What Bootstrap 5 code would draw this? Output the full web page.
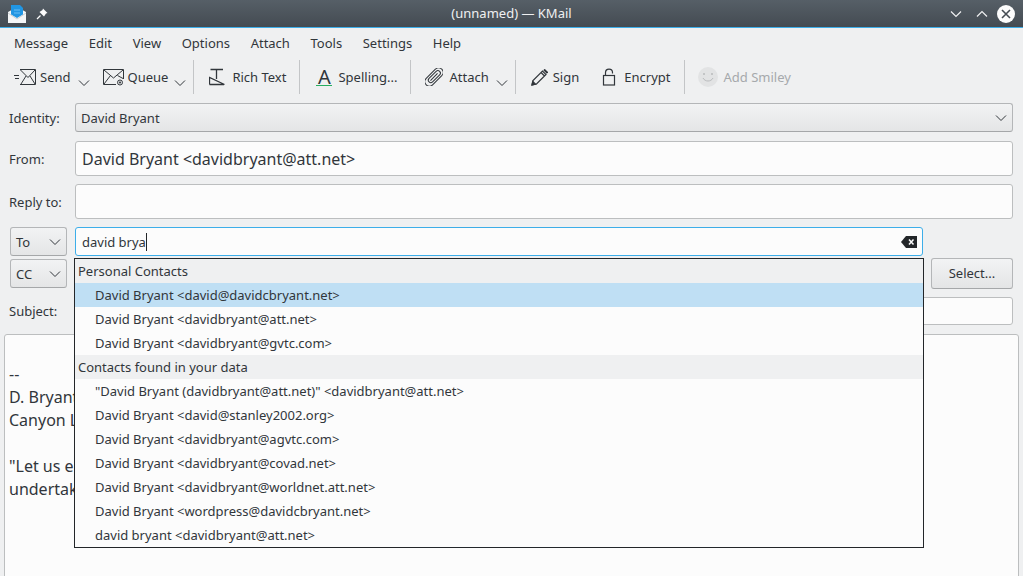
<!DOCTYPE html>
<html lang="en">
<head>
  <meta charset="UTF-8">
  <title>(unnamed) — KMail</title>
  <link href="https://cdn.jsdelivr.net/npm/bootstrap@5.3.0/dist/css/bootstrap.min.css" rel="stylesheet">
  <style>
    html, body { height: 576px; overflow: hidden; }
    body { background: #eff0f1; color: #31363b; font-family: "Noto Sans", sans-serif; font-size: 13px; line-height: 18px; position: relative; }
    svg { display: block; flex: none; }
    /* title bar */
    .titlebar { height: 28px; background: linear-gradient(#565f67, #444b52); border-bottom: 1px solid #3daee9; position: relative; padding: 0 8px 0 8px; }
    .title-text { position: absolute; left: 0; right: 0; top: 4px; text-align: center; color: #eff0f1; }
    .pin-icon { margin-left: 10px; }
    /* menu */
    .menubar { height: 30px; padding-left: 3.7px; }
    .menu-item { padding: 0 10.3px; }
    /* toolbar */
    .toolbar { height: 40px; padding: 0 0 2px 14px; }
    .tool { display: flex; align-items: center; white-space: nowrap; }
    .tool-off { color: #a6a9ac; }
    .arrow { margin-top: 12px; }
    .tool-sep { width: 1px; height: 34px; background: #c3c5c7; }
    .t-send { gap: 4px; }
    .a-send { margin-left: 7px; }
    .t-queue { gap: 3px; margin-left: 13px; }
    .a-queue { margin-left: 6px; }
    .s-queue { margin-left: 7px; }
    .t-rich { gap: 5px; margin-left: 15px; }
    .s-rich, .s-spell { margin-left: 13px; }
    .t-spell { gap: 6px; margin-left: 16px; }
    .spell-a { width: 16px; height: 17px; line-height: 15px; font-size: 20px; text-align: center; border-bottom: 1px solid #27ae60; }
    .t-attach { gap: 6px; margin-left: 14px; }
    .a-attach { margin-left: 7px; }
    .s-attach { margin-left: 7px; }
    .t-sign { gap: 5px; margin-left: 15px; }
    .t-encrypt { gap: 8px; margin-left: 23px; }
    .s-encrypt { margin-left: 14px; }
    .t-smiley { gap: 5px; margin-left: 13px; }
    /* form */
    .form-area { padding: 5px 10px 0 9px; }
    .form-line { display: flex; align-items: center; margin-bottom: 8px; }
    .identity-line { margin-bottom: 9px; }
    .lbl { width: 66px; flex: none; }
    .field { flex: 1; background: #fcfcfc; border: 1px solid #bcbebf; border-radius: 3px; padding: 0 6px; display: flex; align-items: center; }
    .combo-box { background: linear-gradient(#f2f3f4, #e4e5e6); border: 1px solid #b4b6b8; border-bottom-color: #a5a7a9; border-radius: 3px; display: flex; align-items: center; justify-content: space-between; padding: 0 5px; height: 29px; }
    .identity { flex: 1; }
    .from-field { height: 35px; font-size: 16px; }
    .reply-field { height: 35px; }
    .kind { width: 57px; margin-left: 1px; margin-right: 8px; flex: none; }
    .to-field { height: 29px; border-color: #3daee9; padding-right: 5px; justify-content: space-between; margin-right: 90px; }
    .caret-line { display: inline-block; width: 1px; height: 18px; background: #232629; vertical-align: -4px; }
    .select-btn { width: 82px; height: 31px; margin: -1px 0 -1px 8px; padding-bottom: 2px; justify-content: center; }
    .subject-field { height: 28px; }
    .to-line { margin-bottom: 3px; }
    .cc-line { margin-bottom: 9px; }
    /* editor */
    .editor { position: absolute; left: 4px; top: 334px; width: 1015px; height: 250px; background: #fcfcfc; border: 1px solid #bcbebf; border-radius: 3px 3px 0 0; padding: 28px 4px 0; font-size: 16px; line-height: 23px; color: #31363b; }
    /* completion popup */
    .popup { position: absolute; left: 74px; top: 258px; width: 850px; height: 290px; background: #fcfcfc; border: 1px solid #232629; }
    .pop-head { height: 24px; line-height: 24px; background: #eff0f1; padding-left: 3px; }
    .pop-row { height: 24px; line-height: 24px; padding-left: 20px; }
    .pop-on { background: #bfdff4; }
  </style>
</head>
<body>
  <!-- title bar -->
  <div class="titlebar d-flex align-items-center justify-content-between">
    <div class="d-flex align-items-center">
      <svg width="18" height="18" viewBox="0 0 18 18">
        <path d="M0 7 L9 2 L18 7 V18 H0Z" fill="#f4f6f7"/>
        <path d="M3 9.500 V0 H12 L15 3 V9.500 L9 13Z" fill="#2196e3"/>
        <path d="M6 5 H12 M6 8 H12" stroke="#6dbdf2"/>
        <path d="M0 8 L9 14 L18 8" fill="none" stroke="#c9ced2"/>
      </svg>
      <svg class="pin-icon" width="12" height="12" viewBox="0 0 12 12">
        <path d="M7 .5 L11.500 5 L10 5.500 L8 8.500 L3.500 4 L6.500 2Z" fill="#fcfcfc"/>
        <path d="M4.500 7.500 L1 11" stroke="#fcfcfc" stroke-width="1.2"/>
      </svg>
    </div>
    <div class="title-text">(unnamed) — KMail</div>
    <div class="d-flex align-items-center gap-2">
      <svg class="me-1" width="14" height="14" viewBox="0 0 14 14"><path d="M2 4.500 L7 9.500 L12 4.500" fill="none" stroke="#eff0f1" stroke-width="1.2"/></svg>
      <svg width="14" height="14" viewBox="0 0 14 14"><path d="M2 9.500 L7 4.500 L12 9.500" fill="none" stroke="#eff0f1" stroke-width="1.2"/></svg>
      <svg width="18" height="18" viewBox="0 0 18 18"><circle cx="9" cy="9" r="9" fill="#fcfcfc"/><path d="M5 5 L13 13 M13 5 L5 13" stroke="#444b52" stroke-width="1.6"/></svg>
    </div>
  </div>

  <!-- menu bar -->
  <div class="menubar d-flex align-items-center">
    <span class="menu-item">Message</span>
    <span class="menu-item">Edit</span>
    <span class="menu-item">View</span>
    <span class="menu-item">Options</span>
    <span class="menu-item">Attach</span>
    <span class="menu-item">Tools</span>
    <span class="menu-item">Settings</span>
    <span class="menu-item">Help</span>
  </div>

  <!-- tool bar -->
  <div class="toolbar d-flex align-items-center">
    <div class="tool t-send">
      <svg width="22" height="18" viewBox="0 0 22 18" fill="none" stroke="#31363b">
        <path d="M0 7.500 H5 M1 10.500 H5 M6 1.500 H21.500 V16.500 H6 M6.500 2 L14 9.500 L21 2 M7 16 L12 8 M21 16 L16 8"/>
      </svg>
      <span>Send</span>
    </div>
    <svg class="arrow a-send" width="12" height="8" viewBox="0 0 12 8"><path d="M1 1.500 L6 6.500 L11 1.500" fill="none" stroke="#31363b"/></svg>
    <div class="tool t-queue">
      <svg width="22" height="18" viewBox="0 0 22 18" fill="none" stroke="#31363b">
        <path d="M13 16.500 H.5 V1.500 H20.500 V11 M1 2 L10.500 10 L20 2 M1 16 L7.500 7.500 M20 10.500 L14.500 7.500"/>
        <circle cx="17" cy="14.500" r="2.500"/><circle cx="17" cy="14.500" r=".7" fill="#31363b"/>
      </svg>
      <span>Queue</span>
    </div>
    <svg class="arrow a-queue" width="12" height="8" viewBox="0 0 12 8"><path d="M1 1.500 L6 6.500 L11 1.500" fill="none" stroke="#31363b"/></svg>
    <div class="tool-sep s-queue"></div>
    <div class="tool t-rich">
      <svg width="18" height="18" viewBox="0 0 18 18" fill="none" stroke="#31363b">
        <path d="M1.500 1.500 H14 M7.500 1.500 V11 M.5 16.500 H15 M.5 16.500 V9.500 L15.500 16.500" stroke-width="1.300"/>
      </svg>
      <span>Rich Text</span>
    </div>
    <div class="tool-sep s-rich"></div>
    <div class="tool t-spell">
      <span class="spell-a">A</span>
      <span>Spelling...</span>
    </div>
    <div class="tool-sep s-spell"></div>
    <div class="tool t-attach">
      <svg width="18" height="18" viewBox="0 0 18 18" fill="none" stroke="#31363b">
        <g transform="rotate(45 9 9)">
          <rect x="4.500" y="-2" width="9" height="22" rx="4.500"/>
          <rect x="6.500" y="1" width="5" height="15" rx="2.500"/>
          <path d="M9 4 V14"/>
        </g>
      </svg>
      <span>Attach</span>
    </div>
    <svg class="arrow a-attach" width="12" height="8" viewBox="0 0 12 8"><path d="M1 1.500 L6 6.500 L11 1.500" fill="none" stroke="#31363b"/></svg>
    <div class="tool-sep s-attach"></div>
    <div class="tool t-sign">
      <svg width="17" height="17" viewBox="0 0 17 17" fill="none" stroke="#31363b" stroke-width="1.2">
        <path d="M1 16 L2 11.500 L11.500 2 L15 5.500 L5.500 15Z M10 3.500 L13.500 7"/>
        <path d="M1 16 L1.800 12.500 L4.500 15.200Z" fill="#31363b"/>
        <path d="M13 .5 L16.500 4" stroke-width="2"/>
      </svg>
      <span>Sign</span>
    </div>
    <div class="tool t-encrypt">
      <svg width="14" height="18" viewBox="0 0 14 18" fill="none" stroke="#31363b" stroke-width="1.2">
        <rect x="1.500" y="7.500" width="11" height="9.500"/>
        <path d="M3.500 7.500 V4.500 C3.500 0 10.500 0 10.500 4.500 V5.500"/>
      </svg>
      <span>Encrypt</span>
    </div>
    <div class="tool-sep s-encrypt"></div>
    <div class="tool tool-off t-smiley">
      <svg width="20" height="20" viewBox="0 0 20 20">
        <circle cx="10" cy="10" r="10" fill="#e2e3e4"/>
        <circle cx="6" cy="7" r="1" fill="#b9bbbd"/><circle cx="14" cy="7" r="1" fill="#b9bbbd"/>
        <path d="M5 11 C7 15 13 15 15 11" fill="none" stroke="#b9bbbd"/>
      </svg>
      <span>Add Smiley</span>
    </div>
  </div>

  <!-- header fields -->
  <div class="form-area">
    <div class="form-line identity-line">
      <span class="lbl">Identity:</span>
      <div class="combo-box identity">
        <span>David Bryant</span>
        <svg width="12" height="8" viewBox="0 0 12 8"><path d="M1 1.500 L6 6.500 L11 1.500" fill="none" stroke="#31363b"/></svg>
      </div>
    </div>
    <div class="form-line">
      <span class="lbl">From:</span>
      <div class="field from-field">David Bryant &lt;davidbryant@att.net&gt;</div>
    </div>
    <div class="form-line">
      <span class="lbl">Reply to:</span>
      <div class="field reply-field"></div>
    </div>
    <div class="form-line to-line">
      <div class="combo-box kind">
        <span>To</span>
        <svg width="12" height="8" viewBox="0 0 12 8"><path d="M1 1.500 L6 6.500 L11 1.500" fill="none" stroke="#31363b"/></svg>
      </div>
      <div class="field to-field">
        <span>david brya<span class="caret-line"></span></span>
        <svg width="16" height="12" viewBox="0 0 16 12">
          <path d="M5 0 H16 V12 H5 L0 6Z" fill="#232629"/>
          <path d="M8 3.500 L12.500 8.500 M12.500 3.500 L8 8.500" stroke="#fcfcfc" stroke-width="1.500"/>
        </svg>
      </div>
    </div>
    <div class="form-line cc-line">
      <div class="combo-box kind">
        <span>CC</span>
        <svg width="12" height="8" viewBox="0 0 12 8"><path d="M1 1.500 L6 6.500 L11 1.500" fill="none" stroke="#31363b"/></svg>
      </div>
      <div class="field subject-field"></div>
      <div class="combo-box select-btn">Select...</div>
    </div>
    <div class="form-line">
      <span class="lbl">Subject:</span>
      <div class="field subject-field"></div>
    </div>
  </div>

  <!-- message body -->
  <div class="editor">
    <div>--</div>
    <div>D. Bryant</div>
    <div>Canyon Lake, Texas</div>
    <div>&nbsp;</div>
    <div>"Let us endeavor so to live that when we come to die</div>
    <div>undertaker will be sorry."</div>
  </div>

  <!-- address completion -->
  <div class="popup">
    <div class="pop-head">Personal Contacts</div>
    <div class="pop-row pop-on">David Bryant &lt;david@davidcbryant.net&gt;</div>
    <div class="pop-row">David Bryant &lt;davidbryant@att.net&gt;</div>
    <div class="pop-row">David Bryant &lt;davidbryant@gvtc.com&gt;</div>
    <div class="pop-head">Contacts found in your data</div>
    <div class="pop-row">"David Bryant (davidbryant@att.net)" &lt;davidbryant@att.net&gt;</div>
    <div class="pop-row">David Bryant &lt;david@stanley2002.org&gt;</div>
    <div class="pop-row">David Bryant &lt;davidbryant@agvtc.com&gt;</div>
    <div class="pop-row">David Bryant &lt;davidbryant@covad.net&gt;</div>
    <div class="pop-row">David Bryant &lt;davidbryant@worldnet.att.net&gt;</div>
    <div class="pop-row">David Bryant &lt;wordpress@davidcbryant.net&gt;</div>
    <div class="pop-row">david bryant &lt;davidbryant@att.net&gt;</div>
  </div>

  <script src="https://cdn.jsdelivr.net/npm/bootstrap@5.3.0/dist/js/bootstrap.bundle.min.js"></script>
</body>
</html>
